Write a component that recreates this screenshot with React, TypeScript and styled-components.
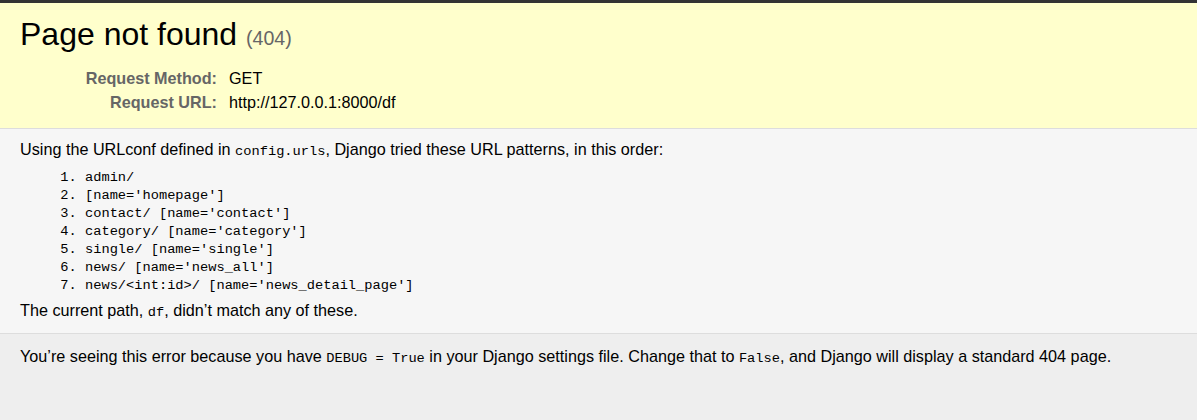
import React from "react";
import styled, { createGlobalStyle } from "styled-components";

const GlobalStyle = createGlobalStyle`
  html * { padding: 0; margin: 0; }
  body {
    margin: 0;
    font-family: "Liberation Sans", Arial, sans-serif;
    font-size: 16.2px;
    background: #eee;
    color: #000;
  }
`;

const patterns = [
  "admin/",
  "[name='homepage']",
  "contact/ [name='contact']",
  "category/ [name='category']",
  "single/ [name='single']",
  "news/ [name='news_all']",
  "news/<int:id>/ [name='news_detail_page']",
];

export default function App() {
  return (
    <>
      <GlobalStyle />
      <Page>
        <Summary>
          <Title>
            Page not found <Status>(404)</Status>
          </Title>
          <MetaTable>
            <tbody>
              <tr>
                <MetaLabel>Request Method:</MetaLabel>
                <MetaValue>GET</MetaValue>
              </tr>
              <tr>
                <MetaLabel>Request URL:</MetaLabel>
                <MetaValue>http://127.0.0.1:8000/df</MetaValue>
              </tr>
            </tbody>
          </MetaTable>
        </Summary>
        <Info>
          <Text>
            Using the URLconf defined in <Code>config.urls</Code>, Django tried
            these URL patterns, in this order:
          </Text>
          <PatternList>
            {patterns.map((p, i) => (
              <Pattern key={i}>{p}</Pattern>
            ))}
          </PatternList>
          <Text>
            The current path, <Code>df</Code>, didn’t match any of these.
          </Text>
        </Info>
        <Explanation>
          <Text>
            You’re seeing this error because you have <Code>DEBUG = True</Code>{" "}
            in your Django settings file. Change that to <Code>False</Code>, and
            Django will display a standard 404 page.
          </Text>
        </Explanation>
      </Page>
    </>
  );
}

const Page = styled.div`
  border-top: 3px solid #333;
  min-height: 417px;
`;

const Section = styled.div`
  padding: 12.5px 20px;
  border-bottom: 1px solid #ddd;
`;

const Summary = styled(Section)`
  background: #ffc;
  padding-bottom: 14.5px;
`;

const Info = styled(Section)`
  background: #f6f6f6;
  padding-top: 9.5px;
  padding-bottom: 10.5px;
`;

const Explanation = styled(Section)`
  background: #eee;
  border-bottom: none;
  padding-top: 11.5px;
`;

const Title = styled.h1`
  font-size: 32px;
  font-weight: normal;
  line-height: 37px;
  margin-bottom: 9px;
`;

const Status = styled.span`
  font-size: 19.6px;
  color: #666;
`;

const MetaTable = styled.table`
  border: none;
  border-collapse: collapse;
  width: 100%;
`;

const MetaLabel = styled.th`
  width: 194px;
  text-align: right;
  vertical-align: top;
  color: #666;
  line-height: 20px;
  padding: 2px 8px 2px 3px;
`;

const MetaValue = styled.td`
  vertical-align: top;
  line-height: 20px;
  padding: 2px 3px 2px 4px;
`;

const Text = styled.p`
  line-height: 20px;
`;

const Code = styled.code`
  font-family: "Liberation Mono", "DejaVu Sans Mono", monospace;
  font-size: 13.7px;
`;

const PatternList = styled.ol`
  margin: 7px 64px 5px 65px;
`;

const Pattern = styled.li`
  font-family: "Liberation Mono", "DejaVu Sans Mono", monospace;
  font-size: 13.7px;
  line-height: 18px;
`;
